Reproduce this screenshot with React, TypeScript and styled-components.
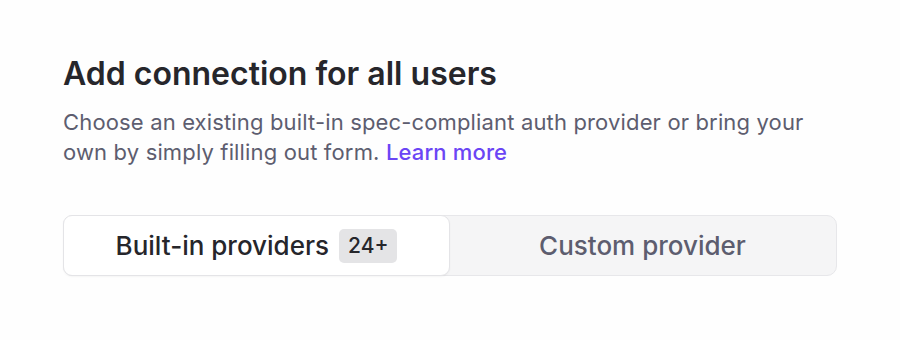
import React, { useState } from "react";
import styled, { createGlobalStyle } from "styled-components";

const GlobalStyle = createGlobalStyle`
  html, body {
    margin: 0;
    padding: 0;
    background: #fefefe;
    font-family: Inter, "Noto Sans", sans-serif;
    -webkit-font-smoothing: antialiased;
  }
`;

const Page = styled.div`
  width: 900px;
  height: 340px;
  box-sizing: border-box;
  padding: 54px 63px 0 63px;
`;

const Title = styled.h2`
  margin: 0;
  font-size: 32px;
  line-height: 40px;
  font-weight: 600;
  color: #26262b;
`;

const Description = styled.p`
  margin: 13px 0 0 0;
  width: 774px;
  font-size: 22px;
  line-height: 30px;
  letter-spacing: 0.15px;
  color: #5d5d6f;
`;

const LearnMore = styled.a`
  color: #6b45f5;
  font-weight: 500;
  text-decoration: none;
`;

const Tabs = styled.div`
  margin-top: 48px;
  width: 774px;
  height: 61px;
  box-sizing: border-box;
  display: grid;
  grid-template-columns: 1fr 1fr;
  background: #f5f5f6;
  border: 1px solid #e7e7ea;
  border-radius: 10px;
`;

const Tab = styled.button<{ $active?: boolean }>`
  display: flex;
  align-items: center;
  justify-content: center;
  gap: 10px;
  padding: 0;
  font-family: inherit;
  font-size: 26px;
  font-weight: 500;
  cursor: pointer;
  border-radius: 9px;
  border: ${(p) => (p.$active ? "1px solid #e4e4e7" : "1px solid transparent")};
  background: ${(p) => (p.$active ? "#ffffff" : "transparent")};
  color: ${(p) => (p.$active ? "#26262b" : "#5d5d6f")};
  box-shadow: ${(p) => (p.$active ? "0 1px 2px rgba(0, 0, 0, 0.04)" : "none")};
  margin: -1px 0 -1px -1px;
`;

const Badge = styled.span`
  display: inline-flex;
  align-items: center;
  height: 34px;
  padding: 0 9px;
  border-radius: 5px;
  background: #e4e4e6;
  color: #26262b;
  font-size: 21px;
  font-weight: 500;
`;

export default function App() {
  const [tab, setTab] = useState("builtin");

  return (
    <>
      <GlobalStyle />
      <Page>
        <Title>Add connection for all users</Title>
        <Description>
          Choose an existing built-in spec-compliant auth provider or bring your
          own by simply filling out form. <LearnMore href="#">Learn more</LearnMore>
        </Description>
        <Tabs>
          <Tab $active={tab === "builtin"} onClick={() => setTab("builtin")}>
            Built-in providers <Badge>24+</Badge>
          </Tab>
          <Tab $active={tab === "custom"} onClick={() => setTab("custom")}>
            Custom provider
          </Tab>
        </Tabs>
      </Page>
    </>
  );
}
